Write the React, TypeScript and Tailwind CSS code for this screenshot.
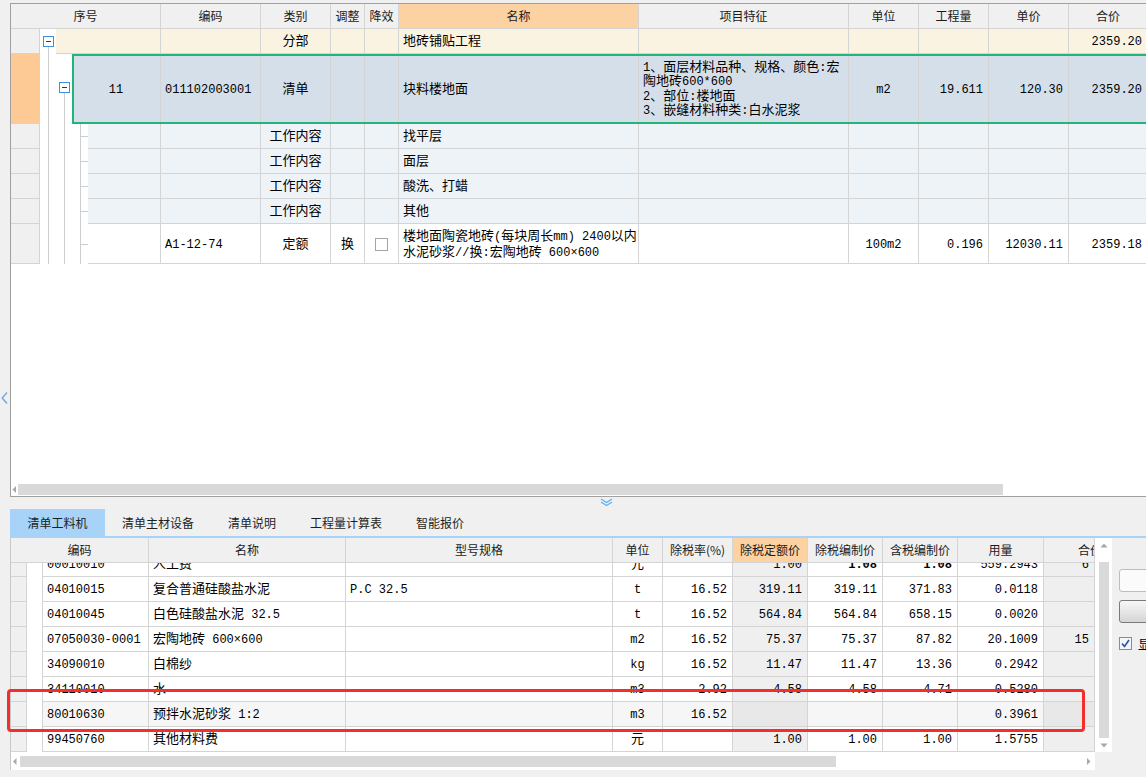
import React from 'react';

type Align = 'l' | 'c' | 'r';

const mono = "font-['Liberation_Mono','Noto_Sans_CJK_SC',monospace]";
const sans = "font-['Noto_Sans_CJK_SC',sans-serif]";

const alignCls: Record<Align, string> = {
  l: 'justify-start pl-[4px]',
  c: 'justify-center',
  r: 'justify-end pr-[5px]',
};

// CJK runs get a slightly larger size so they take the width of the original Song font
const T = (s: string) => (
  <span>
    {s.split(/([\u3000-\u303f\u4e00-\u9fff\uff00-\uffef]+)/).map((p, i) =>
      /[\u3000-\u303f\u4e00-\u9fff\uff00-\uffef]/.test(p) ? (
        <span key={i} className="text-[13px]">
          {p}
        </span>
      ) : (
        p
      ),
    )}
  </span>
);

const Cell: React.FC<{ w: string; a?: Align; bg?: string; children?: React.ReactNode }> = ({
  w,
  a = 'l',
  bg = '',
  children,
}) => (
  <div
    className={`${w} ${bg} ${alignCls[a]} shrink-0 h-full pt-[2px] flex items-center border-r border-b border-[#d4d4d4] overflow-hidden whitespace-pre`}
  >
    {typeof children === 'string' ? T(children) : children}
  </div>
);

const HeadCell: React.FC<{ w: string; hl?: boolean; extra?: string; children?: React.ReactNode }> = ({
  w,
  hl,
  extra = 'justify-center',
  children,
}) => (
  <div
    className={`${w} ${hl ? 'bg-[#fdd2a2]' : ''} ${extra} shrink-0 h-full flex items-center border-r border-b border-[#d4d4d4] whitespace-nowrap overflow-hidden`}
  >
    {children}
  </div>
);

// top grid columns after the first (序号) cell
const topW = ['w-[100px]', 'w-[70px]', 'w-[34px]', 'w-[34px]', 'w-[240px]', 'w-[210px]', 'w-[70px]', 'w-[70px]', 'w-[80px]', 'w-[79px]'];
const topA: Align[] = ['l', 'c', 'c', 'c', 'l', 'l', 'c', 'r', 'r', 'r'];
const topHead = ['编码', '类别', '调整', '降效', '名称', '项目特征', '单位', '工程量', '单价', '合价'];

const MinusBox: React.FC<{ x: number; y: number }> = ({ x, y }) => (
  <>
    <rect x={x + 0.5} y={y + 0.5} width="10" height="10" fill="white" stroke="#3f8fdc" />
    <line x1={x + 3} y1={y + 5.5} x2={x + 8} y2={y + 5.5} stroke="#1b3f78" />
  </>
);

const ChildTree: React.FC<{ h: number }> = ({ h }) => {
  const mid = Math.floor(h / 2) + 0.5;
  return (
    <svg width="48" height={h} className="block shrink-0 bg-white">
      <line x1="8.5" y1="0" x2="8.5" y2={h} stroke="#cdcdcd" />
      <line x1="24.5" y1="0" x2="24.5" y2={h} stroke="#cdcdcd" />
      <line x1="40.5" y1="0" x2="40.5" y2={h} stroke="#cdcdcd" />
      <line x1="40.5" y1={mid} x2="48" y2={mid} stroke="#cdcdcd" />
    </svg>
  );
};

const RowHdr: React.FC<{ bg?: string }> = ({ bg = 'bg-[#f0f0f0]' }) => (
  <div className={`w-[29px] shrink-0 h-full border-r border-b border-[#d4d4d4] ${bg}`} />
);

const workItems = ['找平层', '面层', '酸洗、打蜡', '其他'];

// lower grid
const lowW = ['w-[106px]', 'w-[197px]', 'w-[267px]', 'w-[50px]', 'w-[70px]', 'w-[75px]', 'w-[75px]', 'w-[75px]', 'w-[86px]', 'w-[51px]'];
const lowA: Align[] = ['l', 'l', 'l', 'c', 'r', 'r', 'r', 'r', 'r', 'r'];
const lowHead = ['名称', '型号规格', '单位', '除税率(%)', '除税定额价', '除税编制价', '含税编制价', '用量'];

const lowRows = [
  ['00010010', '人工费', '', '元', '', '1.00', '1.08', '1.08', '559.2943', '6'],
  ['04010015', '复合普通硅酸盐水泥', 'P.C 32.5', 't', '16.52', '319.11', '319.11', '371.83', '0.0118', ''],
  ['04010045', '白色硅酸盐水泥 32.5', '', 't', '16.52', '564.84', '564.84', '658.15', '0.0020', ''],
  ['07050030-0001', '宏陶地砖 600×600', '', 'm2', '16.52', '75.37', '75.37', '87.82', '20.1009', '15'],
  ['34090010', '白棉纱', '', 'kg', '16.52', '11.47', '11.47', '13.36', '0.2942', ''],
  ['34110010', '水', '', 'm3', '2.92', '4.58', '4.58', '4.71', '0.5280', ''],
  ['80010630', '预拌水泥砂浆 1:2', '', 'm3', '16.52', '', '', '', '0.3961', ''],
  ['99450760', '其他材料费', '', '元', '', '1.00', '1.00', '1.00', '1.5755', ''],
];

const tabs = ['清单工料机', '清单主材设备', '清单说明', '工程量计算表', '智能报价'];

export default function App() {
  return (
    <div className={`relative w-[1146px] h-[777px] overflow-hidden bg-[#f0f0f0] text-black text-[12px] ${mono}`}>
      {/* Upper grid panel */}
      <div className="flex h-[497px]">
        <div className="w-[10px] shrink-0 pt-[392px] pl-[1px]">
          <svg width="7" height="12" viewBox="0 0 7 12">
            <path d="M6 0.5 L1.2 6 L6 11.5" fill="none" stroke="#6fa8e0" strokeWidth="1.4" />
          </svg>
        </div>
        <div className="flex-1 min-w-0 mt-[3px] flex flex-col bg-white border-l border-t border-b border-[#a0a0a0] overflow-hidden">
          <div className="flex-1 min-h-0 overflow-hidden">
            {/* header */}
            <div className={`flex h-[25px] bg-[#f0f0f0] text-[#1a1a1a] ${sans}`}>
              <HeadCell w="w-[150px]">序号</HeadCell>
              {topHead.map((t, i) => (
                <HeadCell key={t} w={topW[i]} hl={t === '名称'}>
                  {t}
                </HeadCell>
              ))}
            </div>

            {/* 分部 */}
            <div className="flex h-[25px]">
              <RowHdr />
              <svg width="16" height="25" className="block shrink-0 bg-white">
                <line x1="8.5" y1="17" x2="8.5" y2="25" stroke="#cdcdcd" />
                <MinusBox x={3} y={7} />
              </svg>
              <Cell w="w-[105px]" bg="bg-[#fbf3e1]" />
              {['', '分部', '', '', '地砖铺贴工程', '', '', '', '', '2359.20'].map((v, i) => (
                <Cell key={i} w={topW[i]} a={topA[i]} bg="bg-[#fbf3e1]">
                  {v}
                </Cell>
              ))}
            </div>

            {/* 清单 */}
            <div className="flex h-[70px]">
              <RowHdr bg="bg-[#fdca95]" />
              <svg width="32" height="70" className="block shrink-0 bg-white">
                <line x1="8.5" y1="0" x2="8.5" y2="70" stroke="#cdcdcd" />
                <line x1="24.5" y1="38" x2="24.5" y2="70" stroke="#cdcdcd" />
                <MinusBox x={19} y={28} />
              </svg>
              <div className="relative flex h-full">
                <Cell w="w-[89px]" a="c" bg="bg-[#d5dfe9]">
                  11
                </Cell>
                {[
                  '011102003001',
                  '清单',
                  '',
                  '',
                  '块料楼地面',
                  <div key="f" className="leading-[14.5px]">
                    <div>{T('1、面层材料品种、规格、颜色:宏')}</div>
                    <div>{T('陶地砖600*600')}</div>
                    <div>{T('2、部位:楼地面')}</div>
                    <div>{T('3、嵌缝材料种类:白水泥浆')}</div>
                  </div>,
                  'm2',
                  '19.611',
                  '120.30',
                  '2359.20',
                ].map((v, i) => (
                  <Cell key={i} w={topW[i]} a={topA[i]} bg="bg-[#d5dfe9]">
                    {v}
                  </Cell>
                ))}
                <div className="absolute inset-0 border-2 border-[#22b47b] pointer-events-none" />
              </div>
            </div>

            {/* 工作内容 */}
            {workItems.map((w) => (
              <div key={w} className="flex h-[25px]">
                <RowHdr />
                <ChildTree h={25} />
                <Cell w="w-[73px]" bg="bg-[#eef3f8]" />
                {['', '工作内容', '', '', w, '', '', '', '', ''].map((v, i) => (
                  <Cell key={i} w={topW[i]} a={topA[i]} bg="bg-[#eef3f8]">
                    {v}
                  </Cell>
                ))}
              </div>
            ))}

            {/* 定额 */}
            <div className="flex h-[40px]">
              <RowHdr />
              <ChildTree h={40} />
              <Cell w="w-[73px]" />
              {[
                'A1-12-74',
                '定额',
                '换',
                <div key="cb" className="w-[13px] h-[13px] border border-[#a5a5a5] bg-white" />,
                <div key="n" className="leading-[15px]">
                  <div>{T('楼地面陶瓷地砖(每块周长mm) 2400以内')}</div>
                  <div>{T('水泥砂浆//换:宏陶地砖 600×600')}</div>
                </div>,
                '',
                '100m2',
                '0.196',
                '12030.11',
                '2359.18',
              ].map((v, i) => (
                <Cell key={i} w={topW[i]} a={topA[i]}>
                  {v}
                </Cell>
              ))}
            </div>
          </div>

          {/* horizontal scrollbar */}
          <div className="h-[14px] shrink-0 flex items-center">
            <svg width="7" height="11" className="block shrink-0">
              <path d="M5 2 L1.5 5.5 L5 9 Z" fill="#a8a8a8" />
            </svg>
            <div className="w-[985px] h-[11px] shrink-0 bg-[#d9d9d9]" />
          </div>
        </div>
      </div>

      {/* splitter */}
      <div className="h-[12px] pl-[600px] pt-[1px]">
        <svg width="13" height="9" viewBox="0 0 13 9">
          <path d="M1 1 L6.5 4.5 L12 1" fill="none" stroke="#62b0f0" strokeWidth="1.3" />
          <path d="M1 4 L6.5 7.5 L12 4" fill="none" stroke="#62b0f0" strokeWidth="1.3" />
        </svg>
      </div>

      {/* tabs */}
      <div className={`h-[27px] flex pl-[10px] text-[#1e1e1e] ${sans}`}>
        {tabs.map((t, i) => (
          <div
            key={t}
            className={`h-full flex items-center justify-center ${i === 0 ? 'w-[95px] bg-[#a7d3f8]' : 'px-[17px]'}`}
          >
            {t}
          </div>
        ))}
      </div>
      <div className="ml-[10px] h-[2px] bg-[#a7d3f8]" />

      {/* lower grid */}
      <div className="flex h-[232px]">
        <div className="w-[10px] shrink-0" />
        <div className="w-[1085px] shrink-0 flex flex-col border-l border-[#c8c8c8]">
          <div className={`flex h-[25px] shrink-0 bg-[#f0f0f0] text-[#1a1a1a] ${sans}`}>
            <HeadCell w="w-[138px]">编码</HeadCell>
            {lowHead.map((t, i) => (
              <HeadCell key={t} w={lowW[i + 1]} hl={t === '除税定额价'}>
                {t}
              </HeadCell>
            ))}
            <HeadCell w="w-[51px]" extra="justify-start pl-[34px]">
              合价
            </HeadCell>
          </div>

          <div className="h-[189px] shrink-0 overflow-hidden bg-white">
            <div className="-mt-[11px]">
              {lowRows.map((r, ri) => {
                const sel = r[0] === '80010630';
                return (
                  <div key={r[0]} className="flex h-[25px]">
                    <div className="w-[16px] shrink-0 h-full bg-[#f0f0f0] border-r border-b border-[#d4d4d4]" />
                    <div className="w-[16px] shrink-0 h-full bg-white border-r border-[#d4d4d4]" />
                    {r.map((v, i) => {
                      const gray = i === 5 || i === 9;
                      const bg = gray ? (sel ? 'bg-[#e8e8e8]' : 'bg-[#efefef]') : sel ? 'bg-[#f6f6f6]' : '';
                      return (
                        <Cell key={i} w={lowW[i]} a={i === 9 ? 'r' : lowA[i]} bg={bg}>
                          {ri === 0 && (i === 6 || i === 7) ? <span className="font-bold">{v}</span> : v}
                        </Cell>
                      );
                    })}
                  </div>
                );
              })}
            </div>
          </div>

          <div className="h-[18px] shrink-0 flex items-center bg-white">
            <svg width="9" height="11" className="block shrink-0">
              <path d="M5.5 2 L2 5.5 L5.5 9 Z" fill="#a8a8a8" />
            </svg>
            <div className="w-[816px] h-[11px] shrink-0 bg-[#d9d9d9]" />
            <div className="flex-1" />
            <svg width="6" height="11" className="block shrink-0 mr-[3px]">
              <path d="M1 2 L4.5 5.5 L1 9 Z" fill="#a8a8a8" />
            </svg>
          </div>
        </div>

        {/* vertical scrollbar */}
        <div className="w-[17px] h-[214px] shrink-0 bg-white flex flex-col items-center">
          <svg width="8" height="5" className="block mt-[5px]">
            <path d="M0.5 4.5 L4 0.5 L7.5 4.5 Z" fill="#a8a8a8" />
          </svg>
          <div className="mt-[14px] w-[10px] h-[176px] bg-[#d9d9d9]" />
          <svg width="8" height="5" className="block mt-[5px]">
            <path d="M0.5 0.5 L4 4.5 L7.5 0.5 Z" fill="#a8a8a8" />
          </svg>
        </div>

        {/* side panel */}
        <div className={`flex-1 min-w-0 overflow-hidden pl-[7px] pt-[31px] flex flex-col ${sans}`}>
          <div className="w-[60px] h-[23px] shrink-0 rounded-[3px] border border-[#bdbdbd] bg-[#fbfbfb]" />
          <div className="mt-[8px] w-[60px] h-[23px] shrink-0 rounded-[3px] border border-[#7a7a7a] bg-linear-to-b from-[#f7f7f7] to-[#d5d5d5]" />
          <div className="mt-[11px] flex items-center">
            <div className="w-[13px] h-[13px] shrink-0 border border-[#8c8c8c] bg-[#f3f6fb] flex items-center justify-center">
              <svg width="9" height="9" viewBox="0 0 9 9">
                <path d="M1 4.5 L3.5 7.5 L8 1" fill="none" stroke="#2c4fa5" strokeWidth="1.6" />
              </svg>
            </div>
            <span className="ml-[6px] text-[13px] whitespace-nowrap">显示</span>
          </div>
        </div>
      </div>

      {/* annotation box */}
      <div className="absolute left-[7px] top-[689px] w-[1078px] h-[43px] border-[3px] border-[#f42d2d] rounded-[4px] pointer-events-none" />
    </div>
  );
}
